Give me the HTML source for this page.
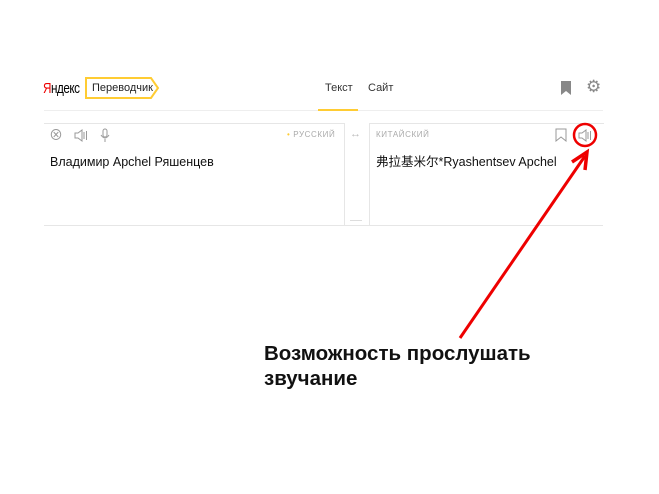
<!DOCTYPE html>
<html><head><meta charset="utf-8"><style>
body{margin:0;width:659px;height:494px;background:#fff;font-family:"Liberation Sans","Noto Sans CJK SC",sans-serif;position:relative;overflow:hidden}
.a{position:absolute;line-height:1.2}
</style></head><body>
<div class="a" style="left:43px;top:80px;font-size:15px;letter-spacing:-0.6px;transform:scaleX(0.78);transform-origin:left"><span style="color:#e00">Я</span>ндекс</div>
<svg class="a" style="left:85px;top:77px" width="75" height="22"><path d="M1 1H66L73 11L66 21H1Z" fill="#fff" stroke="#fc3" stroke-width="2"/></svg>
<div class="a" style="left:92px;top:82px;font-size:11px;color:#222">Переводчик</div>
<div class="a" style="left:325px;top:82px;font-size:11px;color:#333">Текст</div>
<div class="a" style="left:368px;top:82px;font-size:11px;color:#333">Сайт</div>
<svg class="a" style="left:560px;top:81px" width="12" height="14"><path d="M1 0H11V14L6 10L1 14Z" fill="#888"/></svg>
<div class="a" style="left:586px;top:77px;font-size:17px;color:#888">⚙</div>
<div class="a" style="left:44px;top:110px;width:559px;height:1px;background:#eee"></div>
<div class="a" style="left:318px;top:109px;width:40px;height:2px;background:#fc3"></div>
<div class="a" style="left:44px;top:123px;width:300px;height:101px;border:1px solid #e6e6e6;border-left:none;border-bottom:none"></div>
<div class="a" style="left:369px;top:123px;width:234px;height:101px;border:1px solid #e6e6e6;border-right:none;border-bottom:none"></div>
<div class="a" style="left:44px;top:225px;width:559px;height:1px;background:#e6e6e6"></div>
<div class="a" style="left:350px;top:220px;width:12px;height:1px;background:#ddd"></div>
<div class="a" style="left:49px;top:127px;font-size:14px;color:#999">⊗</div>
<svg class="a" style="left:74px;top:129px" width="14" height="13"><path d="M1 4H4L8 1V12L4 9H1Z M10 3V10 M12.5 2V11" fill="none" stroke="#999"/></svg>
<svg class="a" style="left:100px;top:128px" width="10" height="15"><rect x="3" y="1" width="4" height="8" rx="2" fill="none" stroke="#999"/><path d="M1 7Q5 13 9 7M5 11V14" fill="none" stroke="#999"/></svg>
<div class="a" style="left:287px;top:130px;font-size:8px;color:#aaa;letter-spacing:0.6px"><span style="color:#fc3">•</span> РУССКИЙ</div>
<div class="a" style="left:350px;top:128px;font-size:11px;color:#bbb">↔</div>
<div class="a" style="left:376px;top:130px;font-size:8px;color:#aaa;letter-spacing:0.6px">КИТАЙСКИЙ</div>
<svg class="a" style="left:555px;top:128px" width="12" height="14"><path d="M1 1H11V13L6 9L1 13Z" fill="none" stroke="#999"/></svg>
<svg class="a" style="left:578px;top:129px" width="14" height="13"><path d="M1 4H4L8 1V12L4 9H1Z M10 3V10 M12.5 2V11" fill="none" stroke="#999"/></svg>
<div class="a" style="left:50px;top:155px;font-size:12.5px;line-height:15px;color:#111">Владимир Apchel Ряшенцев</div>
<div class="a" style="left:376px;top:155px;font-size:12.5px;line-height:15px;color:#111">弗拉基米尔*Ryashentsev Apchel</div>
<svg class="a" style="left:0;top:0" width="659" height="494"><circle cx="585" cy="135" r="11" fill="none" stroke="#e00" stroke-width="2.5"/><path d="M460 338L585 156" stroke="#e00" stroke-width="3" fill="none"/><path d="M572 162L587 152L585 170" stroke="#e00" stroke-width="3.5" fill="none"/></svg>
<div class="a" style="left:264px;top:341px;font-size:20.5px;font-weight:bold;color:#111;line-height:25px">Возможность прослушать<br>звучание</div>
</body></html>
